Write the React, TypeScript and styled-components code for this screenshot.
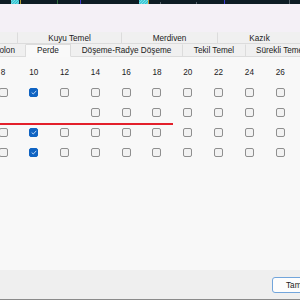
import React from "react";
import styled, { createGlobalStyle } from "styled-components";

const Global = createGlobalStyle`
  html, body { margin: 0; padding: 0; background: #f8f8f8; }
  body { font-family: "Liberation Sans", Arial, sans-serif; }
  #root { width: 300px; height: 300px; overflow: hidden; }
`;

const Frame = styled.div`
  width: 300px;
  height: 300px;
  display: flex;
  flex-direction: column;
  overflow: hidden;
  position: relative;
`;

const TopStrip = styled.div`
  height: 4px;
  background: #0d1c24;
  flex-shrink: 0;
  svg { display: block; }
`;

const TitleArea = styled.div`
  height: 28px;
  background: #f4f0f6;
  flex-shrink: 0;
`;

const TabRow = styled.div<{ $h: number }>`
  display: flex;
  height: ${(p) => p.$h}px;
  flex-shrink: 0;
  background: #f0f0f0;
  overflow: hidden;
`;

const Tab = styled.div<{ $w: number; $active?: boolean; $offset?: number }>`
  flex: 0 0 ${(p) => p.$w}px;
  margin-left: ${(p) => p.$offset ?? 0}px;
  display: flex;
  align-items: center;
  justify-content: center;
  font-size: 8.2px;
  color: #1b1b1b;
  white-space: nowrap;
  box-sizing: border-box;
  border-right: 1px solid #dcdcdc;
  border-bottom: 1px solid ${(p) => (p.$active ? "#f9f9f9" : "#dcdcdc")};
  background: ${(p) => (p.$active ? "#f9f9f9" : "#f0f0f0")};
  border-top: 1px solid ${(p) => (p.$active ? "#dcdcdc" : "transparent")};
`;

const Content = styled.div`
  flex: 1;
  background: #f8f8f8;
  padding-top: 11px;
  position: relative;
`;

const Grid = styled.div`
  display: grid;
  grid-template-columns: repeat(10, 30.8px);
  grid-auto-rows: 20px;
  grid-template-rows: 14px;
  margin-left: -12.4px;
`;

const HeadCell = styled.div`
  font-size: 8.2px;
  line-height: 10px;
  color: #1b1b1b;
  text-align: center;
  align-self: start;
`;

const Cell = styled.div`
  display: flex;
  align-items: center;
  justify-content: center;
`;

const Box = styled.div<{ $checked?: boolean }>`
  width: 9px;
  height: 9px;
  box-sizing: border-box;
  border-radius: 2px;
  border: 1px solid ${(p) => (p.$checked ? "#0f63c2" : "#8f8f8f")};
  background: ${(p) => (p.$checked ? "#0f63c2" : "#f2f2f2")};
  display: flex;
  align-items: center;
  justify-content: center;
  svg { display: block; }
`;

const RedLine = styled.div`
  position: absolute;
  left: 0;
  top: 66px;
  width: 173px;
  height: 2px;
  background: #e3202b;
`;

const Footer = styled.div`
  height: 29px;
  flex-shrink: 0;
  background: #efefef;
  display: flex;
  align-items: center;
  padding-left: 272px;
  border-bottom: 1px solid #8a8a8a;
`;

const Button = styled.div`
  flex: 0 0 60px;
  height: 16px;
  box-sizing: border-box;
  border: 1px solid #72a5db;
  border-radius: 3px;
  background: #fdfdfd;
  font-size: 8.2px;
  color: #1b1b1b;
  display: flex;
  align-items: center;
  padding-left: 13px;
  margin-top: 1px;
`;

const cols = [8, 10, 12, 14, 16, 18, 20, 22, 24, 26];
const rows: (boolean | null)[][] = [
  cols.map((c) => c === 10),
  cols.map((c) => (c >= 14 ? false : null)),
  cols.map((c) => c === 10),
  cols.map((c) => c === 10),
];

const Check = () => (
  <svg width="6" height="5" viewBox="0 0 6 5">
    <path d="M0.7 2.6 L2.3 4 L5.3 0.8" fill="none" stroke="#cfe2f7" strokeWidth="0.9" />
  </svg>
);

export default function App() {
  return (
    <Frame>
      <Global />
      <TopStrip>
        <svg width="300" height="4">
          <defs>
            <pattern id="h" width="2" height="2" patternUnits="userSpaceOnUse" patternTransform="rotate(45)">
              <rect width="2" height="2" fill="#1fb9c9" />
              <rect width="1" height="2" fill="#7fe3ea" />
            </pattern>
          </defs>
          <rect x="11" y="0" width="8" height="4" fill="url(#h)" />
          <rect x="139" y="0" width="9" height="4" fill="url(#h)" />
          <rect x="20" y="0" width="1" height="4" fill="#b59a2e" />
          <rect x="148" y="0" width="1" height="4" fill="#b59a2e" />
          <rect x="57" y="0" width="1" height="4" fill="#2e6b3a" />
          <rect x="80" y="0" width="1" height="4" fill="#3a3acb" />
          <rect x="224" y="0" width="1" height="4" fill="#3a3acb" />
          <rect x="160" y="2" width="1" height="2" fill="#56626a" />
          <rect x="196" y="2" width="1" height="2" fill="#56626a" />
          <rect x="289" y="0" width="1" height="4" fill="#56626a" />
        </svg>
      </TopStrip>
      <TitleArea />
      <TabRow $h={12}>
        <Tab $w={18} />
        <Tab $w={104}>Kuyu Temel</Tab>
        <Tab $w={96}>Merdiven</Tab>
        <Tab $w={84}>Kazık</Tab>
      </TabRow>
      <TabRow $h={13}>
        <Tab $w={42} $offset={-16}>Kolon</Tab>
        <Tab $w={45} $active>Perde</Tab>
        <Tab $w={112}>Döşeme-Radye Döşeme</Tab>
        <Tab $w={63}>Tekil Temel</Tab>
        <Tab $w={70}>Sürekli Temel</Tab>
      </TabRow>
      <Content>
        <Grid>
          {cols.map((c) => (
            <HeadCell key={c}>{c}</HeadCell>
          ))}
          {rows.map((r, i) =>
            r.map((v, j) => (
              <Cell key={`${i}-${j}`}>
                {v === null ? null : <Box $checked={v}>{v && <Check />}</Box>}
              </Cell>
            ))
          )}
        </Grid>
        <RedLine />
      </Content>
      <Footer>
        <Button>Tamam</Button>
      </Footer>
    </Frame>
  );
}
